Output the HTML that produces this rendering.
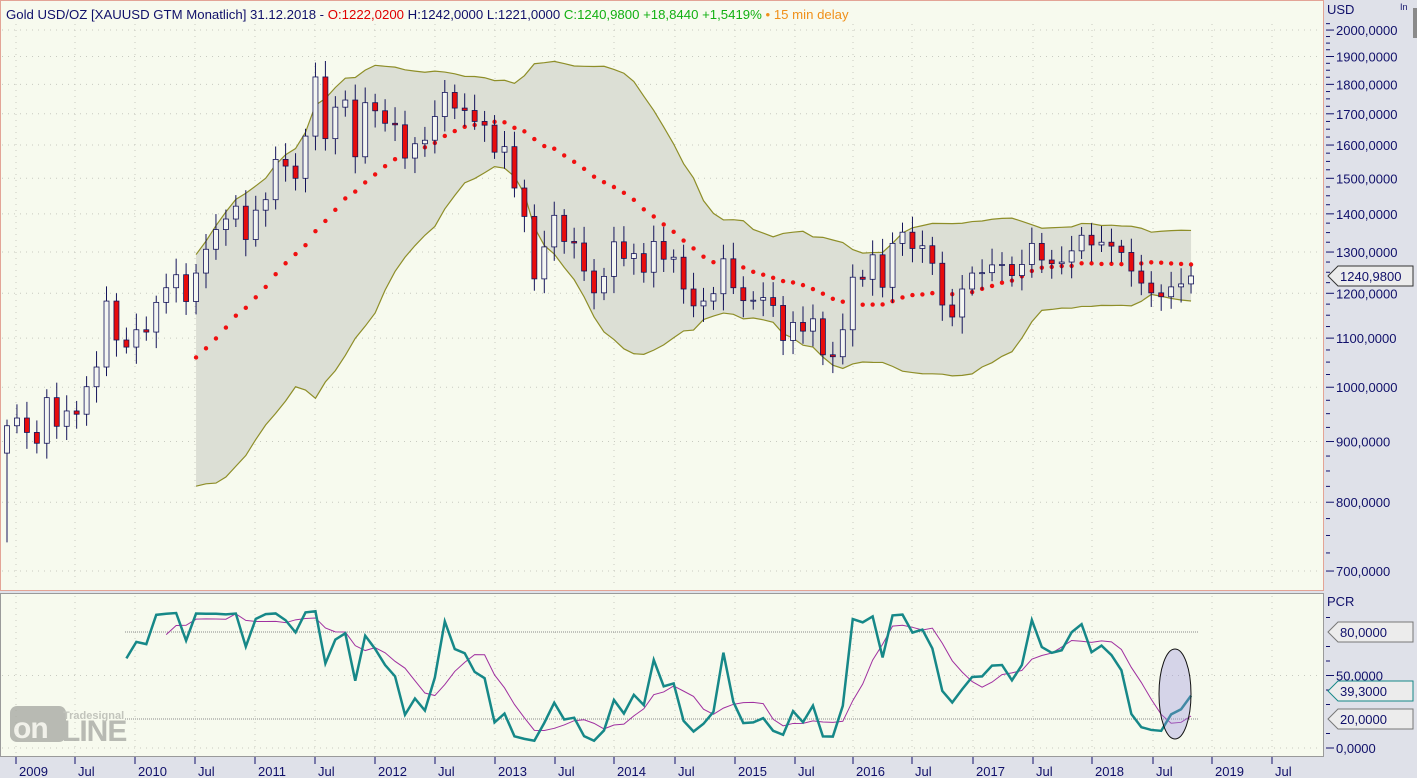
<!DOCTYPE html>
<html><head><meta charset="utf-8"><style>
html,body{margin:0;padding:0;width:1417px;height:778px;overflow:hidden;background:#dfe1e9;font-family:"Liberation Sans",sans-serif}
svg{position:absolute;left:0;top:0}
</style></head><body>
<svg id="s" width="1417" height="778" xmlns="http://www.w3.org/2000/svg" font-family="Liberation Sans, sans-serif">
<rect x="0" y="0" width="1417" height="778" fill="#dfe1e9"/>
<rect x="0" y="0" width="1324" height="590" fill="#f7faee"/>
<rect x="0.5" y="0.5" width="1323" height="590" fill="none" stroke="#e3a496"/>
<rect x="0" y="593" width="1324" height="163" fill="#f7faee"/>
<rect x="0.5" y="593.5" width="1323" height="163" fill="none" stroke="#9a9a9a"/>
<rect x="1413" y="8" width="4" height="30" fill="#8a8a8a"/>
<g id="grid"></g>
<g id="band"></g>
<g id="cand"></g>
<g id="ind"></g>
<text x="6" y="19" font-size="13.2" fill="#10106a">Gold USD/OZ [XAUUSD GTM Monatlich] 31.12.2018 - <tspan fill="#e00000">O:1222,0200</tspan> H:1242,0000 L:1221,0000 <tspan fill="#12b012">C:1240,9800 +18,8440 +1,5419%</tspan> <tspan fill="#f0901a">• 15 min delay</tspan></text>
<text x="1327" y="14" font-size="13" fill="#10106a">USD</text>
<text x="1400" y="10" font-size="9" fill="#10106a">In</text>
<text x="1327" y="606" font-size="13" fill="#10106a">PCR</text>
<g id="axis" font-size="13" fill="#10106a"></g>
<g opacity="0.8">
<rect x="10" y="706" width="56" height="36" rx="7" fill="#a9aba5"/>
<text x="13" y="738" font-size="30" font-weight="bold" fill="#f0f0ea" letter-spacing="-1">on</text>
<text x="62" y="741" font-size="30" font-weight="bold" fill="#a9aba5" letter-spacing="-1">LINE</text>
<text x="63" y="719" font-size="11" font-weight="bold" fill="#b5b7b0">Tradesignal</text>
</g>
</svg>
<script>
var C=[928,942,916,897,980,927,955,949,1001,1040,1182,1096,
1081,1118,1113,1179,1213,1244,1181,1248,1307,1358,1386,1421,
1332,1410,1439,1556,1536,1500,1628,1826,1620,1722,1746,1564,
1737,1710,1669,1664,1560,1604,1615,1691,1772,1719,1711,1675,
1663,1578,1595,1472,1393,1234,1313,1396,1327,1323,1253,1201,
1240,1326,1284,1296,1250,1327,1282,1287,1210,1171,1182,1199,
1283,1213,1183,1184,1190,1172,1095,1134,1115,1142,1065,1061,
1118,1238,1233,1293,1214,1322,1351,1309,1316,1272,1173,1146,
1210,1248,1249,1268,1269,1242,1269,1322,1280,1271,1275,1303,
1343,1318,1325,1315,1299,1253,1224,1201,1192,1215,1222,1241];
var NS="http://www.w3.org/2000/svg";
function el(p,t,a,txt){var e=document.createElementNS(NS,t);for(var k in a)e.setAttribute(k,a[k]);if(txt)e.textContent=txt;document.getElementById(p).appendChild(e);return e;}
function Y(p){return 3946.8-515.3*Math.log(p);}
function X(i){return 7+9.95*i;}
function PY(v){return 748-1.45*v;}
var tl=[["2009",16],["Jul",75],["2010",135],["Jul",195],["2011",255],["Jul",315],["2012",375],["Jul",435],["2013",495],["Jul",555],["2014",614],["Jul",675],["2015",735],["Jul",795],["2016",853],["Jul",912],["2017",973],["Jul",1033],["2018",1092],["Jul",1153],["2019",1212],["Jul",1272]];
tl.forEach(function(t){el("grid","line",{x1:t[1],y1:24,x2:t[1],y2:588,stroke:"#c8cac0","stroke-dasharray":"1 5"});
el("grid","line",{x1:t[1],y1:596,x2:t[1],y2:754,stroke:"#c8cac0","stroke-dasharray":"1 5"});
el("axis","line",{x1:t[1],y1:757,x2:t[1],y2:764,stroke:"#10106a"});
el("axis","text",{x:t[1]+3,y:776},t[0]);});
for(var p=700;p<=2000;p+=100){var y=Y(p);el("grid","line",{x1:2,y1:y,x2:1322,y2:y,stroke:"#c8cac0","stroke-dasharray":"1 5"});
el("axis","line",{x1:1326,y1:y,x2:1334,y2:y,stroke:"#10106a"});
el("axis","text",{x:1336,y:y+5},p.toFixed(0)+",0000");
for(var q=p+25;q<p+100&&q<=2025;q+=25){var yy=Y(q);el("axis","line",{x1:1326,y1:yy,x2:1330,y2:yy,stroke:"#10106a"});}}
[0,50].forEach(function(v){el("axis","line",{x1:1326,y1:PY(v),x2:1334,y2:PY(v),stroke:"#10106a"});el("axis","text",{x:1336,y:PY(v)+5},v.toFixed(0)+",0000");
el("grid","line",{x1:2,y1:PY(v),x2:1322,y2:PY(v),stroke:"#c8cac0","stroke-dasharray":"1 5"});});
[10,30,40,60,70,90].forEach(function(v){el("axis","line",{x1:1326,y1:PY(v),x2:1330,y2:PY(v),stroke:"#10106a"});});
var up=[],lo=[],mid=[];
for(var i=19;i<C.length;i++){var s=0;for(var j=i-19;j<=i;j++)s+=C[j];var m=s/20;var v=0;for(j=i-19;j<=i;j++)v+=(C[j]-m)*(C[j]-m);var sd=Math.sqrt(v/20);
up.push([X(i),Y(m+2*sd)]);lo.push([X(i),Y(m-2*sd)]);mid.push([X(i),Y(m)]);}
var d="M"+up.map(function(a){return a.join(",")}).join("L")+"L"+lo.slice().reverse().map(function(a){return a.join(",")}).join("L")+"Z";
el("band","path",{d:d,fill:"#dcdfd5"});
el("band","polyline",{points:up.map(function(a){return a.join(",")}).join(" "),fill:"none",stroke:"#8e8e28","stroke-width":1.2});
el("band","polyline",{points:lo.map(function(a){return a.join(",")}).join(" "),fill:"none",stroke:"#8e8e28","stroke-width":1.2});
for(var k=0;k<mid.length;k++){el("band","circle",{cx:mid[k][0],cy:mid[k][1],r:2.2,fill:"#f01010"});}
for(i=0;i<C.length;i++){var o=i?C[i-1]:880,c=C[i];var h=Math.max(o,c)*(1+0.012+0.02*Math.abs(Math.sin(i*2.3))),l=Math.min(o,c)*(1-0.012-0.02*Math.abs(Math.cos(i*1.7)));
if(i==0){l=740;}
var x=X(i);el("cand","line",{x1:x,y1:Y(h),x2:x,y2:Y(l),stroke:"#14145a"});
var t1=Y(Math.max(o,c)),b1=Y(Math.min(o,c));if(b1-t1<1)b1=t1+1;
el("cand","rect",{x:x-2.5,y:t1,width:5,height:b1-t1,fill:c>=o?"#f4f6f2":"#e80c0c",stroke:"#14145a","stroke-width":0.8});}
var pc=[];
for(i=12;i<C.length;i++){var mx=-1,mn=1e9;for(j=i-12;j<=i;j++){mx=Math.max(mx,C[j]*1.02);mn=Math.min(mn,C[j]*0.98);}
var r=(C[i]-mn)/(mx-mn)*100;r=Math.max(5,Math.min(98,r));pc.push([i,r]);}
el("ind","line",{x1:125,y1:PY(80),x2:1198,y2:PY(80),stroke:"#8a8a8a","stroke-dasharray":"1 1"});
el("ind","line",{x1:125,y1:PY(20),x2:1198,y2:PY(20),stroke:"#8a8a8a","stroke-dasharray":"1 1"});
var sm=[];for(k=4;k<pc.length;k++){var s2=0;for(j=k-4;j<=k;j++)s2+=pc[j][1];sm.push(X(pc[k][0])+","+PY(s2/5));}
el("ind","polyline",{points:sm.join(" "),fill:"none",stroke:"#a030a0","stroke-width":1});
el("ind","polyline",{points:pc.map(function(a){return X(a[0])+","+PY(a[1])}).join(" "),fill:"none",stroke:"#168888","stroke-width":2.5});
el("ind","ellipse",{cx:1175,cy:694,rx:16,ry:45,fill:"rgba(150,140,220,0.35)",stroke:"#111","stroke-width":1});
function tag(y,txt,col){el("axis","path",{d:"M1328,"+y+" L1338,"+(y-10)+" L1413,"+(y-10)+" L1413,"+(y+10)+" L1338,"+(y+10)+" Z",fill:"#ececec",stroke:col});
el("axis","text",{x:1340,y:y+5,fill:"#10106a"},txt);}
tag(276,"1240,9800","#333");tag(PY(80),"80,0000","#777");tag(PY(39.3),"39,3000","#168888");tag(PY(20),"20,0000","#777");
</script>
</body></html>
